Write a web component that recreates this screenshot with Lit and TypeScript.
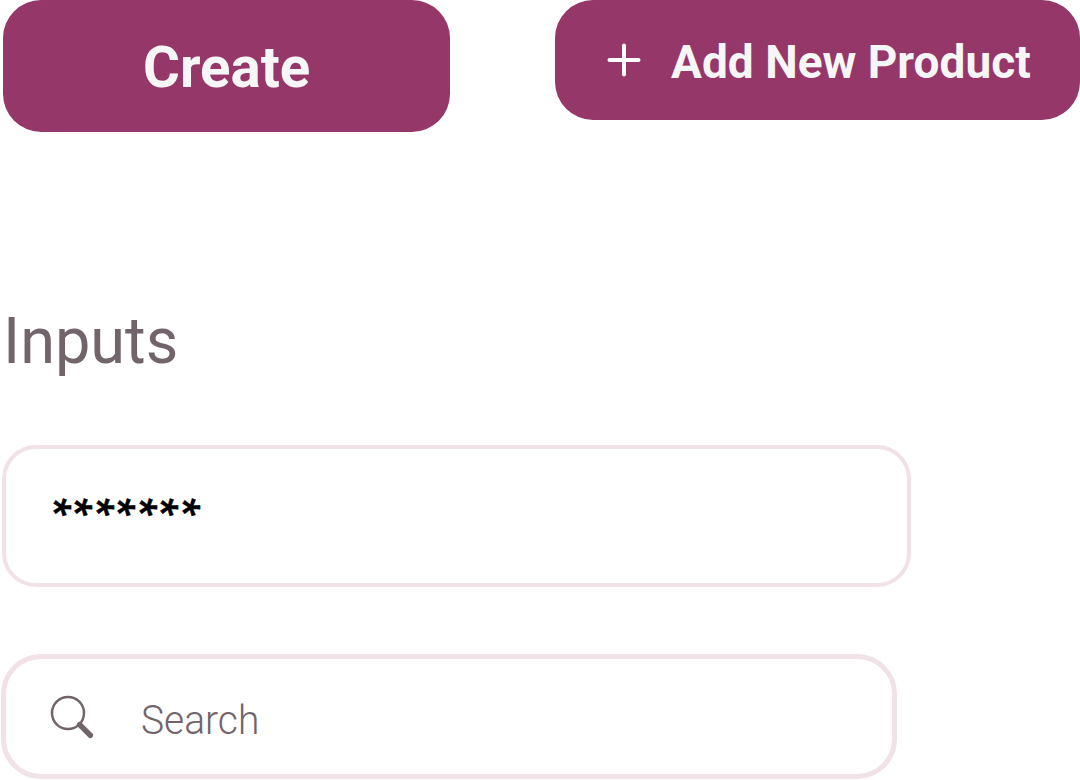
import { LitElement, css, html } from 'lit';
import { customElement, property } from 'lit/decorators.js';

@customElement('app-button')
export class AppButton extends LitElement {
  @property({ type: String }) label = '';
  @property({ type: Boolean, reflect: true }) wide = false;

  static styles = css`
    :host {
      display: block;
    }

    .button {
      display: flex;
      align-items: center;
      box-sizing: border-box;
      width: 447px;
      height: 132px;
      padding: 2px 0 0 140px;
      border: 0;
      border-radius: 38px;
      background: #963769;
      color: #f6f6f6;
      font: 700 58px/1 Roboto, 'Liberation Sans', sans-serif;
      white-space: nowrap;
    }

    .label {
      transform: scaleX(0.973);
      transform-origin: left center;
    }

    :host([wide]) .button {
      width: 525px;
      height: 120px;
      padding: 0 0 0 52px;
      gap: 30px;
      font-size: 47px;
    }

    :host([wide]) .label {
      padding-top: 2px;
      transform: scaleX(0.979);
    }

    .plus {
      flex: none;
      width: 34px;
      height: 34px;
    }
  `;

  render() {
    return html`
      <button class="button">
        ${this.wide
          ? html`<svg class="plus" viewBox="0 0 34 34" fill="none" stroke="#fff" stroke-width="4" stroke-linecap="round">
              <path d="M17 2.5V31.5M2.5 17H31.5" />
            </svg>`
          : ''}
        <span class="label">${this.label}</span>
      </button>
    `;
  }
}

@customElement('app-root')
export class AppRoot extends LitElement {
  static styles = css`
    :host {
      display: block;
      width: 1080px;
      height: 780px;
      overflow: hidden;
      background: #fff;
      color: #72646b;
      font-family: Roboto, 'Liberation Sans', sans-serif;
    }

    .buttons {
      display: flex;
      align-items: flex-start;
      gap: 105px;
      height: 132px;
      padding-left: 3px;
    }

    .title {
      margin: 172px 0 0 3px;
      height: 141px;
      font-size: 64px;
      font-weight: 400;
      line-height: 75px;
    }

    .title span,
    .placeholder {
      display: inline-block;
      transform: scaleX(0.985);
      transform-origin: left center;
    }

    .placeholder {
      padding-top: 6px;
      transform: scaleX(0.95);
    }

    .field {
      display: flex;
      align-items: center;
      box-sizing: border-box;
      border: 4px solid #f1e2e8;
    }

    .password {
      width: 909px;
      height: 142px;
      margin-left: 1.5px;
      padding: 0 0 19px 47px;
      border-radius: 34px;
      color: #000;
      font-size: 40px;
      font-weight: 700;
    }

    .star {
      display: flex;
      justify-content: center;
      width: 21.6px;
      height: 18px;
      line-height: 35px;
      transform: rotate(90deg);
      -webkit-text-stroke: 0.5px #000;
    }

    .search {
      width: 896px;
      height: 125px;
      margin: 67px 0 0 1px;
      padding-left: 44px;
      border-width: 5px;
      border-radius: 40px;
      font-size: 41px;
      font-weight: 300;
    }

    .glass {
      flex: none;
      width: 44px;
      height: 44px;
      margin-right: 47px;
    }
  `;

  private password = '*******';

  render() {
    return html`
      <div class="buttons">
        <app-button label="Create"></app-button>
        <app-button wide label="Add New Product"></app-button>
      </div>
      <h2 class="title"><span>Inputs</span></h2>
      <div class="field password">${[...this.password].map((c) => html`<span class="star">${c}</span>`)}</div>
      <div class="field search">
        <svg class="glass" viewBox="0 0 44 44" fill="none" stroke="#72646b">
          <circle cx="18" cy="18" r="16" stroke-width="2.5" />
          <path d="M29.6 29.6L40.3 40.3" stroke-width="5.5" stroke-linecap="round" />
        </svg>
        <span class="placeholder">Search</span>
      </div>
    `;
  }
}

declare global {
  interface HTMLElementTagNameMap {
    'app-button': AppButton;
    'app-root': AppRoot;
  }
}
